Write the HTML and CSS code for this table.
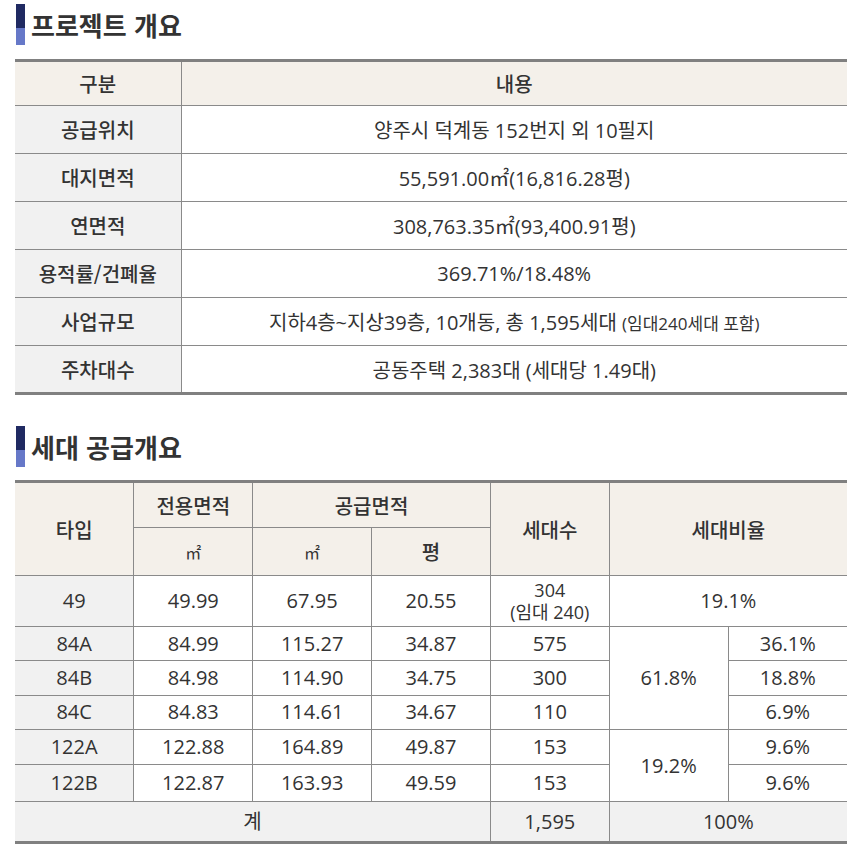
FILE: index.html
```html
<!DOCTYPE html>
<html lang="ko">
<head>
<meta charset="utf-8">
<link rel="stylesheet" href="styles.css">
</head>
<body>
<div class="page">
  <h2 class="title title-first"><span class="bar"></span>프로젝트 개요</h2>
  <table class="tbl overview">
    <colgroup><col class="c-label"><col></colgroup>
    <thead>
      <tr><th>구분</th><th>내용</th></tr>
    </thead>
    <tbody>
      <tr><td class="label">공급위치</td><td>양주시 덕계동 152번지 외 10필지</td></tr>
      <tr><td class="label">대지면적</td><td>55,591.00㎡(16,816.28평)</td></tr>
      <tr><td class="label">연면적</td><td>308,763.35㎡(93,400.91평)</td></tr>
      <tr><td class="label">용적률/건폐율</td><td>369.71%/18.48%</td></tr>
      <tr><td class="label">사업규모</td><td>지하4층~지상39층, 10개동, 총 1,595세대 <span class="small">(임대240세대 포함)</span></td></tr>
      <tr><td class="label">주차대수</td><td>공동주택 2,383대 (세대당 1.49대)</td></tr>
    </tbody>
  </table>

  <h2 class="title title-second"><span class="bar"></span>세대 공급개요</h2>
  <table class="tbl supply">
    <colgroup><col><col><col><col><col><col><col></colgroup>
    <thead>
      <tr class="h1">
        <th rowspan="2">타입</th>
        <th>전용면적</th>
        <th colspan="2">공급면적</th>
        <th rowspan="2">세대수</th>
        <th rowspan="2" colspan="2">세대비율</th>
      </tr>
      <tr class="h2">
        <th class="unit">㎡</th>
        <th class="unit">㎡</th>
        <th>평</th>
      </tr>
    </thead>
    <tbody>
      <tr class="r-tall">
        <td class="label">49</td><td>49.99</td><td>67.95</td><td>20.55</td>
        <td class="lines">304<br>(임대 240)</td>
        <td colspan="2">19.1%</td>
      </tr>
      <tr class="r"><td class="label">84A</td><td>84.99</td><td>115.27</td><td>34.87</td><td>575</td><td rowspan="3">61.8%</td><td>36.1%</td></tr>
      <tr class="r"><td class="label">84B</td><td>84.98</td><td>114.90</td><td>34.75</td><td>300</td><td>18.8%</td></tr>
      <tr class="r"><td class="label">84C</td><td>84.83</td><td>114.61</td><td>34.67</td><td>110</td><td>6.9%</td></tr>
      <tr class="r-b"><td class="label">122A</td><td>122.88</td><td>164.89</td><td>49.87</td><td>153</td><td rowspan="2">19.2%</td><td>9.6%</td></tr>
      <tr class="r-c"><td class="label">122B</td><td>122.87</td><td>163.93</td><td>49.59</td><td>153</td><td>9.6%</td></tr>
      <tr class="total"><td colspan="4">계</td><td>1,595</td><td colspan="2">100%</td></tr>
    </tbody>
  </table>
</div>
</body>
</html>
```

FILE: styles.css
```css
html, body {
  margin: 0;
  padding: 0;
  background: #ffffff;
}

body {
  font-family: "Open Sans", "Noto Sans CJK KR", sans-serif;
  color: #333333;
}

.page {
  padding-left: 15px;
  width: 832px;
}

.title {
  display: flex;
  align-items: center;
  margin: 0;
  height: 41px;
  font-family: "Noto Sans CJK KR", sans-serif;
  font-size: 26px;
  font-weight: 700;
  color: #333333;
}

.title-first {
  margin-top: 4px;
  margin-bottom: 14px;
}

.title-second {
  margin-top: 31px;
  margin-bottom: 13px;
}

.bar {
  display: block;
  width: 9px;
  height: 41px;
  margin-left: 1px;
  margin-right: 6px;
  background: linear-gradient(to bottom, #202a62 0, #202a62 24px, #6678c8 24px, #6678c8 100%);
}

.tbl {
  width: 832px;
  border-collapse: collapse;
  table-layout: fixed;
  border-top: 3px solid #808080;
  border-bottom: 3px solid #808080;
}

.tbl th,
.tbl td {
  border: 1px solid #8a8a8a;
  text-align: center;
  vertical-align: middle;
  padding: 0;
  color: #333333;
}

.tbl tr > :first-child { border-left: none; }
.tbl tr > :last-child { border-right: none; }

.tbl thead tr:first-child th { border-top: none; }
.tbl tbody tr:last-child td { border-bottom: none; }

.tbl th {
  background: #f4f0ea;
  font-family: "Noto Sans CJK KR", sans-serif;
  font-weight: 500;
  font-size: 20px;
}

.overview .c-label { width: 166px; }

.overview tr { height: 48px; }
.overview thead tr { height: 45px; }

.overview td {
  font-size: 20px;
  font-family: "Open Sans", "Noto Sans CJK KR", sans-serif;
}

.overview td.label {
  background: #f1f1f1;
  font-family: "Noto Sans CJK KR", sans-serif;
  font-size: 20px;
  font-weight: 500;
}

.small { font-size: 17px; }

.supply .h1 { height: 46px; }
.supply .h2 { height: 48px; }
.supply .r-tall { height: 51px; }
.supply .r { height: 34.4px; }
.supply .r-b { height: 35px; }
.supply .r-c { height: 37px; }
.supply .total { height: 41px; }

.supply th.unit {
  font-size: 16px;
  font-weight: 400;
}

.supply td {
  font-size: 20px;
  font-family: "Open Sans", "Noto Sans CJK KR", sans-serif;
  line-height: 24px;
}

.supply td.lines {
  font-size: 18px;
  line-height: 22px;
}

.supply td.label { background: #f1f1f1; }

.supply .total td {
  background: #f1f1f1;
}
```
